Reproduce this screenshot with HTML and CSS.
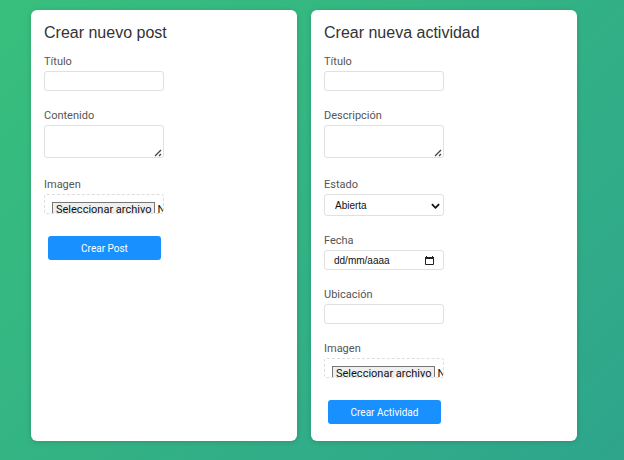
FILE: index.html
```html
<!DOCTYPE html>
<html lang="es">
<head>
<meta charset="utf-8">
<meta name="viewport" content="width=device-width, initial-scale=1">
<title>Crear contenido</title>
<link rel="stylesheet" href="styles.css">
</head>
<body>
<main class="panels">
  <form class="card">
    <h2 class="card-title">Crear nuevo post</h2>
    <div class="field">
      <label class="label" for="post-title">Título</label>
      <input class="control" id="post-title" type="text">
    </div>
    <div class="field field-area">
      <label class="label" for="post-content">Contenido</label>
      <div class="area-wrap">
        <textarea class="control area" id="post-content"></textarea>
        <svg class="grip" viewBox="0 0 8 8" aria-hidden="true"><path d="M1 7L7 1M5 7L7 5"/></svg>
      </div>
    </div>
    <div class="field">
      <label class="label" for="post-image">Imagen</label>
      <div class="file">
        <span class="file-button">Seleccionar archivo</span>
        <span class="file-name">N</span>
        <input class="file-input" id="post-image" type="file">
      </div>
    </div>
    <button class="submit" type="submit">Crear Post</button>
  </form>

  <form class="card">
    <h2 class="card-title">Crear nueva actividad</h2>
    <div class="field">
      <label class="label" for="act-title">Título</label>
      <input class="control" id="act-title" type="text">
    </div>
    <div class="field field-area">
      <label class="label" for="act-description">Descripción</label>
      <div class="area-wrap">
        <textarea class="control area" id="act-description"></textarea>
        <svg class="grip" viewBox="0 0 8 8" aria-hidden="true"><path d="M1 7L7 1M5 7L7 5"/></svg>
      </div>
    </div>
    <div class="field">
      <label class="label" for="act-state">Estado</label>
      <div class="select-wrap">
        <select class="control select" id="act-state">
          <option>Abierta</option>
        </select>
        <svg class="chevron" viewBox="0 0 10 6" aria-hidden="true"><path d="M1 1L5 5L9 1"/></svg>
      </div>
    </div>
    <div class="field">
      <label class="label" for="act-date">Fecha</label>
      <div class="date-wrap">
        <input class="control date" id="act-date" type="text" placeholder="dd/mm/aaaa">
        <svg class="calendar" viewBox="0 0 9 9" aria-hidden="true"><path class="calendar-top" d="M0 1h1V0h1v1h5V0h1v1h1v2H0z"/><path class="calendar-box" d="M.5 2.5v6h8v-6"/></svg>
      </div>
    </div>
    <div class="field">
      <label class="label" for="act-place">Ubicación</label>
      <input class="control" id="act-place" type="text">
    </div>
    <div class="field">
      <label class="label" for="act-image">Imagen</label>
      <div class="file">
        <span class="file-button">Seleccionar archivo</span>
        <span class="file-name">N</span>
        <input class="file-input" id="act-image" type="file">
      </div>
    </div>
    <button class="submit" type="submit">Crear Actividad</button>
  </form>
</main>
</body>
</html>
```
FILE: styles.css
```css
* {
  box-sizing: border-box;
}

body {
  margin: 0;
  min-height: 100vh;
  font-family: "Liberation Sans", Arial, sans-serif;
  background: linear-gradient(135deg, #38bf7d, #2ea58c);
}

.panels {
  display: grid;
  grid-template-columns: 1fr 1fr;
  gap: 14px;
  padding: 10px 47px 19px 31px;
}

.card {
  padding: 13px 13px 17px;
  border-radius: 6px;
  background: #fff;
  box-shadow: 0 1px 5px rgba(0, 0, 0, 0.15);
}

.card-title {
  margin: 0 0 12px;
  font-size: 16px;
  font-weight: 400;
  line-height: 20px;
  color: #333;
}

.field {
  display: flex;
  flex-direction: column;
  gap: 2px;
  width: 120px;
  margin-bottom: 18px;
}

.field-area {
  margin-bottom: 20px;
}

.label {
  font-family: Roboto, sans-serif;
  font-size: 11px;
  font-weight: 400;
  line-height: 14px;
  color: #555;
}

.control {
  display: block;
  width: 100%;
  height: 20px;
  margin: 0;
  padding: 0 9px;
  border: 1px solid #e0e0e0;
  border-radius: 3px;
  background: #fff;
  font-family: "Liberation Sans", Arial, sans-serif;
  font-size: 10px;
  color: #111;
}

.area-wrap,
.select-wrap,
.date-wrap {
  position: relative;
}

.area {
  height: 33px;
  padding: 4px 9px;
  resize: none;
}

.grip {
  position: absolute;
  right: 2px;
  bottom: 1px;
  width: 8px;
  height: 8px;
  fill: none;
  stroke: #444;
  stroke-width: 1.3;
}

.select {
  height: 22px;
  padding: 1px 10px 0;
  appearance: none;
}

.chevron {
  position: absolute;
  top: 9px;
  right: 4px;
  width: 9px;
  height: 6px;
  fill: none;
  stroke: #111;
  stroke-width: 2;
  pointer-events: none;
}

.date::placeholder {
  color: #111;
  opacity: 1;
}

.calendar {
  position: absolute;
  top: 6px;
  right: 10px;
  width: 9px;
  height: 9px;
}

.calendar-top {
  fill: #222;
}

.calendar-box {
  fill: none;
  stroke: #222;
}

.file {
  position: relative;
  display: flex;
  align-items: flex-start;
  gap: 2px;
  height: 20px;
  padding: 7px 0 0 7px;
  overflow: hidden;
  border: 1px dashed #ddd;
  border-radius: 3px;
  font-family: Roboto, sans-serif;
  font-size: 11px;
  line-height: 13px;
  white-space: nowrap;
  color: #111;
}

.file-button {
  flex: none;
  padding: 0 3px;
  border: 1px solid #777;
  background: #efefef;
}

.file-name {
  padding-top: 1px;
}

.file-input {
  position: absolute;
  inset: 0;
  width: 100%;
  opacity: 0;
}

.submit {
  display: block;
  width: 113px;
  height: 24px;
  margin: 22px 0 0 4px;
  padding: 0;
  border: 0;
  border-radius: 3px;
  background: #1890ff;
  font-family: Roboto, sans-serif;
  font-size: 10px;
  font-weight: 400;
  color: #fff;
}
```
